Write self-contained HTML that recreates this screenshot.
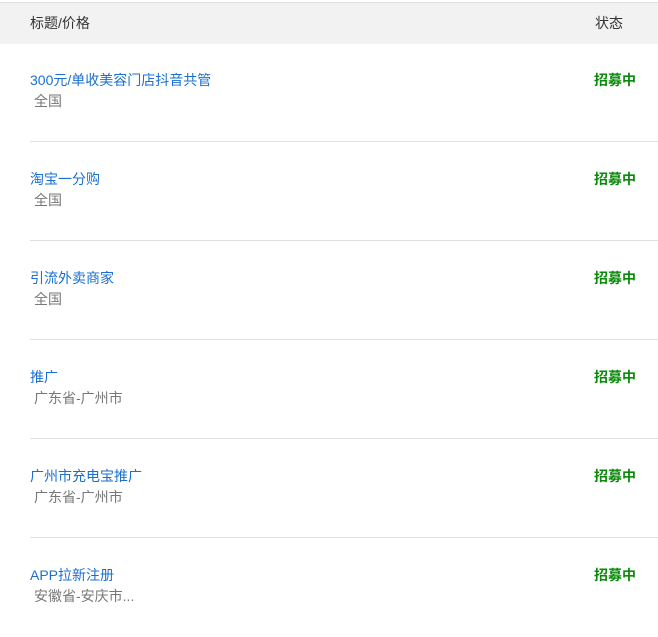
<html><head><style>
body{margin:0;width:658px;height:624px;overflow:hidden;background:#fff;font-family:"Liberation Sans","Noto Sans CJK SC",sans-serif;font-size:14px;position:relative}
.hd{position:absolute;left:0;top:2px;width:658px;height:41px;background:#f2f2f2;border-top:1px solid #e0e0e0}
.hd span{position:absolute;top:10px;color:#333}
.row{position:absolute;left:0;width:658px;height:99px}
.t{position:absolute;left:30px;top:27px;color:#1a6fd1;line-height:20px}
.s{position:absolute;left:34px;top:48px;color:#777;line-height:20px}
.st{position:absolute;left:594px;top:27px;color:#0a8a0a;font-weight:bold;font-size:14px;line-height:20px}
.sep{position:absolute;left:30px;right:0;bottom:0;height:1px;background:#e0e0e0}
</style></head><body>
<div class="hd"><span style="left:30px">标题/价格</span><span style="left:595px">状态</span></div>
<div class="row" style="top:43px"><div class="t">300元/单收美容门店抖音共管</div><div class="s">全国</div><div class="st">招募中</div><div class="sep"></div></div>
<div class="row" style="top:142px"><div class="t">淘宝一分购</div><div class="s">全国</div><div class="st">招募中</div><div class="sep"></div></div>
<div class="row" style="top:241px"><div class="t">引流外卖商家</div><div class="s">全国</div><div class="st">招募中</div><div class="sep"></div></div>
<div class="row" style="top:340px"><div class="t">推广</div><div class="s">广东省-广州市</div><div class="st">招募中</div><div class="sep"></div></div>
<div class="row" style="top:439px"><div class="t">广州市充电宝推广</div><div class="s">广东省-广州市</div><div class="st">招募中</div><div class="sep"></div></div>
<div class="row" style="top:538px"><div class="t">APP拉新注册</div><div class="s">安徽省-安庆市...</div><div class="st">招募中</div></div>
</body></html>
